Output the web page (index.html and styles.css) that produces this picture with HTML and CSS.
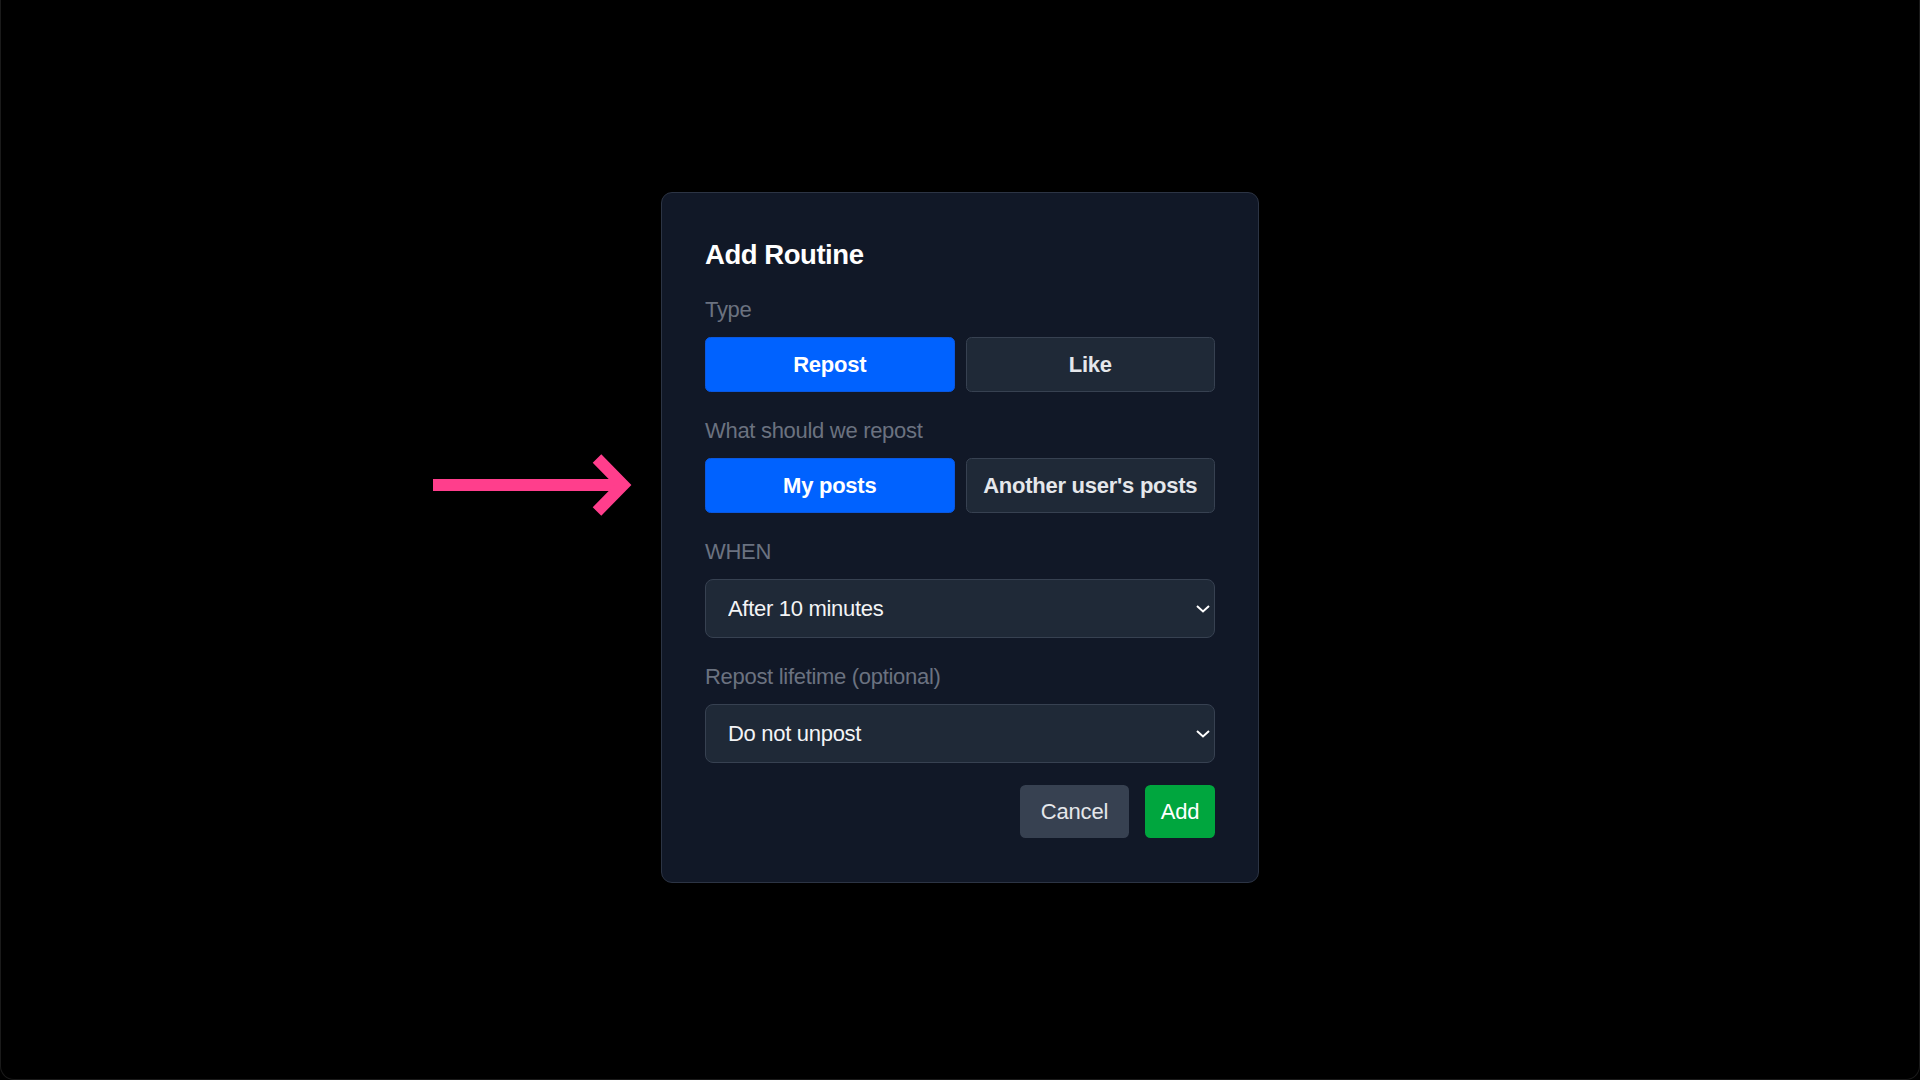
FILE: index.html
```html
<!DOCTYPE html>
<html lang="en">
<head>
<meta charset="utf-8">
<title>Add Routine</title>
<link rel="stylesheet" href="styles.css">
</head>
<body>
<div class="screen">
  <svg class="pointer" width="240" height="100" viewBox="420 435 240 100" aria-hidden="true">
    <line x1="432" y1="485" x2="622" y2="485" stroke="#ff3e8c" stroke-width="12" stroke-linecap="butt"/>
    <polyline points="596,458.5 622,485 596,511.5" fill="none" stroke="#ff3e8c" stroke-width="12" stroke-linejoin="miter" stroke-linecap="butt"/>
  </svg>

  <div class="dialog">
    <h2 class="title">Add Routine</h2>

    <div class="field">
      <div class="label">Type</div>
      <div class="seg">
        <button class="seg-btn active">Repost</button>
        <button class="seg-btn">Like</button>
      </div>
    </div>

    <div class="field">
      <div class="label">What should we repost</div>
      <div class="seg">
        <button class="seg-btn active">My posts</button>
        <button class="seg-btn">Another user's posts</button>
      </div>
    </div>

    <div class="field">
      <div class="label">WHEN</div>
      <div class="select-wrap">
        <select class="select">
          <option>After 10 minutes</option>
        </select>
        <svg class="chev" width="14" height="8" viewBox="0 0 14 8" aria-hidden="true">
          <polyline points="1,1 7,6.5 13,1" fill="none" stroke="#ffffff" stroke-width="2"/>
        </svg>
      </div>
    </div>

    <div class="field">
      <div class="label">Repost lifetime (optional)</div>
      <div class="select-wrap">
        <select class="select">
          <option>Do not unpost</option>
        </select>
        <svg class="chev" width="14" height="8" viewBox="0 0 14 8" aria-hidden="true">
          <polyline points="1,1 7,6.5 13,1" fill="none" stroke="#ffffff" stroke-width="2"/>
        </svg>
      </div>
    </div>

    <div class="actions">
      <button class="btn btn-cancel">Cancel</button>
      <button class="btn btn-add">Add</button>
    </div>
  </div>
</div>
</body>
</html>
```
FILE: styles.css
```css
* { box-sizing: border-box; }
html, body {
  margin: 0;
  padding: 0;
  background: #000;
  width: 1920px;
  height: 1080px;
  overflow: hidden;
  font-family: "Liberation Sans", Arial, Helvetica, sans-serif;
}
.screen {
  position: relative;
  width: 1920px;
  height: 1080px;
  display: flex;
  align-items: center;
  justify-content: center;
  padding-bottom: 4px;
  border: 1px solid #1a1a1a;
  border-top: none;
  border-radius: 0 0 14px 14px;
}
.pointer {
  position: absolute;
  left: 420px;
  top: 435px;
}
.dialog {
  width: 598px;
  background: #111827;
  border: 1px solid #2c3444;
  border-radius: 11px;
  padding: 43px 43px 44px;
  display: flex;
  flex-direction: column;
}
.title {
  margin: 0 0 19px;
  font-size: 27.5px;
  line-height: 38px;
  font-weight: 700;
  letter-spacing: -0.45px;
  color: #ffffff;
}
.field {
  margin-bottom: 22px;
}
.label {
  font-size: 22px;
  line-height: 33px;
  letter-spacing: -0.3px;
  color: #6b7280;
  margin-bottom: 11px;
}
.seg {
  display: flex;
  gap: 11px;
}
.seg-btn {
  flex: 1;
  height: 55px;
  border-radius: 5.5px;
  border: 1px solid #374151;
  background: #1f2937;
  color: #e5e7eb;
  font-family: inherit;
  font-size: 22px;
  font-weight: 700;
  letter-spacing: -0.25px;
  padding: 0;
}
.seg-btn.active {
  background: #0062ff;
  border-color: #0a58e0;
  color: #ffffff;
}
.select-wrap {
  position: relative;
}
.select {
  appearance: none;
  -webkit-appearance: none;
  width: 100%;
  height: 59px;
  border: 1px solid #374151;
  border-radius: 8px;
  background: #1f2937;
  color: #f3f4f6;
  font-family: inherit;
  font-size: 22px;
  letter-spacing: -0.3px;
  padding: 0 40px 0 22px;
  outline: none;
}
.chev {
  position: absolute;
  right: 5px;
  top: 26px;
}
.actions {
  display: flex;
  justify-content: flex-end;
  gap: 16px;
}
.btn {
  height: 53px;
  border: none;
  border-radius: 5.5px;
  font-family: inherit;
  font-size: 22px;
  letter-spacing: -0.2px;
  padding: 0;
}
.btn-cancel {
  width: 109px;
  background: #374151;
  color: #e5e7eb;
}
.btn-add {
  width: 70px;
  background: #00a63e;
  color: #ffffff;
}
```
